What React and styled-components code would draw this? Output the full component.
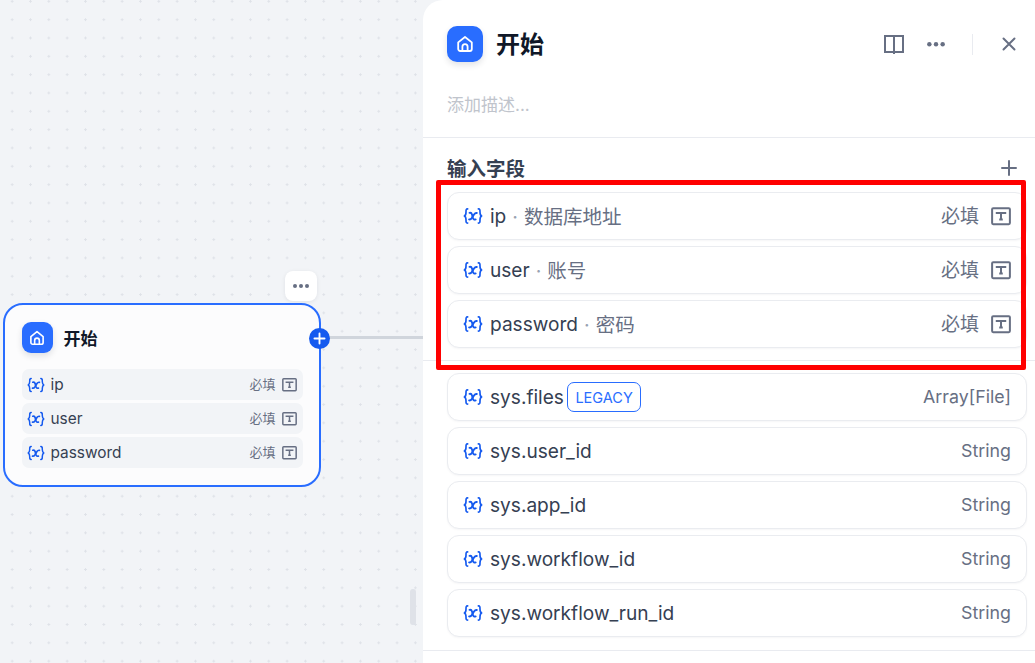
import React from "react";
import styled, { createGlobalStyle } from "styled-components";

const BLUE = "#296dff";
const FONT = `Inter, "Noto Sans CJK SC", sans-serif`;

const GlobalStyle = createGlobalStyle`
  html, body { margin: 0; padding: 0; height: 100%; }
  body { font-family: ${FONT}; background: #f2f4f7; overflow: hidden; }
`;

const Page = styled.div`
  position: relative;
  display: flex;
  width: 1035px;
  height: 663px;
  overflow: hidden;
`;

const Canvas = styled.div`
  position: relative;
  width: 423px;
  flex-shrink: 0;
  background-color: #f2f4f7;
  background-image: radial-gradient(circle, #dfe2e8 1.1px, transparent 1.3px);
  background-size: 18.33px 18.33px;
  background-position: 3px 10.5px;
`;

const Connector = styled.div`
  position: absolute;
  left: 329px;
  top: 336px;
  width: 94px;
  height: 3px;
  background: #d0d5dc;
`;

const MoreButton = styled.div`
  position: absolute;
  left: 285px;
  top: 271px;
  width: 32px;
  height: 30px;
  border-radius: 8px;
  background: #fff;
  box-shadow: 0 1px 4px rgba(16, 24, 40, 0.08);
  display: flex;
  align-items: center;
  justify-content: center;
`;

const Node = styled.div`
  position: absolute;
  left: 3px;
  top: 303px;
  width: 318px;
  height: 184px;
  box-sizing: border-box;
  padding: 17px 16.5px 0;
  background: #fcfcfd;
  border: 2.5px solid ${BLUE};
  border-radius: 20px;
`;

const AddHandle = styled.div`
  position: absolute;
  left: 303.5px;
  top: 22.5px;
  width: 21px;
  height: 21px;
  border-radius: 50%;
  background: #155aef;
  display: flex;
  align-items: center;
  justify-content: center;
`;

const NodeHead = styled.div`
  display: flex;
  align-items: center;
  gap: 11px;
  margin-bottom: 16px;
`;

const AppIcon = styled.div`
  width: ${(p) => p.$size}px;
  height: ${(p) => p.$size}px;
  flex-shrink: 0;
  border-radius: ${(p) => p.$radius}px;
  background: ${BLUE};
  box-shadow: 0 3px 6px rgba(16, 24, 40, 0.12);
  display: flex;
  align-items: center;
  justify-content: center;
`;

const NodeTitle = styled.div`
  font-size: 17px;
  font-weight: 700;
  color: #101828;
`;

const NodeRows = styled.div`
  display: flex;
  flex-direction: column;
  gap: 3px;
`;

const NodeRow = styled.div`
  display: flex;
  align-items: center;
  height: 31px;
  padding: 0 6px 0 5px;
  border-radius: 7px;
  background: #f2f4f7;
`;

const NodeName = styled.span`
  margin-left: 6px;
  font-size: 15.4px;
  color: #354052;
  flex: 1;
`;

const NodeRequired = styled.span`
  font-size: 13px;
  color: #676f83;
  margin: 0 6px 2px 0;
`;

const Panel = styled.div`
  flex: 1;
  background: #fff;
  border-top-left-radius: 20px;
  display: flex;
  flex-direction: column;
`;

const PanelHead = styled.div`
  display: flex;
  align-items: center;
  height: 36px;
  padding: 26px 17px 0 24px;
`;

const PanelTitle = styled.div`
  margin: -3px 0 0 13px;
  font-size: 24px;
  font-weight: 700;
  color: #101828;
  flex: 1;
`;

const HeadActions = styled.div`
  display: flex;
  align-items: center;
  color: #676f83;
`;

const Divider = styled.div`
  width: 1px;
  height: 21px;
  margin: 0 27px 0 26px;
  background: #e9ebf0;
`;

const Description = styled.div`
  margin: 30px 24px 0;
  height: 26px;
  line-height: 26px;
  font-size: 17px;
  color: #c0c4cc;
`;

const Rule = styled.div`
  height: 1px;
  margin-top: ${(p) => p.$top}px;
  background: #e9ebf0;
`;

const SectionHead = styled.div`
  display: flex;
  align-items: center;
  justify-content: space-between;
  height: 22px;
  margin-top: 18px;
  padding: 0 17px 0 24px;
  svg {
    margin-top: 2px;
  }
`;

const SectionTitle = styled.div`
  font-size: 19.5px;
  font-weight: 700;
  color: #354052;
`;

const FieldList = styled.div`
  display: flex;
  flex-direction: column;
  gap: 6px;
  margin: ${(p) => p.$top}px 8px 0 24px;
`;

const Field = styled.div`
  display: flex;
  align-items: center;
  box-sizing: border-box;
  height: 48px;
  padding: 0 15px;
  background: #fff;
  border: 1px solid #eaecf0;
  border-radius: 12px;
  box-shadow: 0 1px 2px rgba(16, 24, 40, 0.04);
`;

const FieldName = styled.span`
  margin-left: 7px;
  font-size: 19.1px;
  color: #354052;
`;

const FieldHint = styled.span`
  margin: 0 0 1px 6px;
  font-size: 19.5px;
  color: #676f83;
  &::before {
    content: "·";
    margin-right: 6px;
    color: #98a2b2;
  }
`;

const Legacy = styled.span`
  margin-left: 3px;
  height: 30px;
  padding: 0 7.5px;
  display: inline-flex;
  align-items: center;
  box-sizing: border-box;
  border: 1px solid ${BLUE};
  border-radius: 7px;
  font-size: 14.5px;
  color: ${BLUE};
`;

const FieldEnd = styled.span`
  margin-left: auto;
  display: flex;
  align-items: center;
  gap: 12px;
  font-size: ${(p) => p.$size}px;
  color: #676f83;
`;

const EndLabel = styled.span`
  margin-bottom: ${(p) => p.$lift}px;
`;

const ResizeGrip = styled.div`
  position: absolute;
  left: 410px;
  top: 589px;
  width: 6px;
  height: 36px;
  border-radius: 3px;
  background: #dfe2e8;
`;

const Highlight = styled.div`
  position: absolute;
  left: 436px;
  top: 180px;
  width: 590px;
  height: 190px;
  box-sizing: border-box;
  border: 5px solid #ff0000;
  border-radius: 2px;
  pointer-events: none;
`;

const IconButton = styled.span`
  display: inline-flex;
  margin-left: ${(p) => p.$left || 0}px;
`;

const HomeIcon = ({ size }) => (
  <svg width={size} height={size} viewBox="0 0 20 20" fill="none" stroke="#fff" strokeWidth="1.8" strokeLinejoin="round" strokeLinecap="round">
    <path d="M3.2 8.4 10 3l6.8 5.4V15a2 2 0 0 1-2 2H5.2a2 2 0 0 1-2-2V8.4Z" />
    <path d="M7.4 17v-4.2a2.6 2.6 0 0 1 5.2 0V17" />
  </svg>
);

const VarIcon = ({ size = 20 }) => (
  <svg width={size} height={size} viewBox="0 0 18 18" fill="none" stroke="#155aef" strokeWidth="1.5" strokeLinecap="round" strokeLinejoin="round">
    <path d="M4.2 2.6C2.6 2.6 2.7 3.9 2.7 5.6c0 2-.3 2.9-1.5 3.4 1.2.5 1.5 1.4 1.5 3.4 0 1.7-.1 3 1.5 3" />
    <path d="M13.8 2.6c1.6 0 1.5 1.3 1.5 3 0 2 .3 2.9 1.5 3.4-1.2.5-1.5 1.4-1.5 3.4 0 1.7.1 3-1.5 3" />
    <path d="M5.8 6.2c1.2-.3 1.9 0 2.3 1.4l.9 3.2c.4 1.3 1.2 1.7 2.4 1.3" strokeWidth="1.7" />
    <path d="M12.4 6.3c-1-.2-1.8.3-2.5 1.3l-2 3.3c-.7 1-1.4 1.4-2.4 1.2" strokeWidth="1.7" />
  </svg>
);

const TextIcon = ({ size = 20 }) => (
  <svg width={size} height={size} viewBox="0 0 18 18" fill="none" stroke="#676f83" strokeWidth="1.8">
    <rect x="1" y="2" width="16" height="14.4" rx="1" />
    <path d="M5.2 7.2V6.2h7.6v1M9 6.2v6M7.4 12.2h3.2" />
  </svg>
);

const Dots = ({ color = "#676f83", width = 18 }) => (
  <svg width={width} height={(width * 6) / 18} viewBox="0 0 18 6" fill={color}>
    <circle cx="3" cy="3" r="2" />
    <circle cx="9" cy="3" r="2" />
    <circle cx="15" cy="3" r="2" />
  </svg>
);

const BookIcon = () => (
  <svg width="22" height="22" viewBox="0 0 22 22" fill="none" stroke="#676f83" strokeWidth="2">
    <path d="M2 3h18v16H2zM11 3v18" />
  </svg>
);

const CloseIcon = () => (
  <svg width="18" height="18" viewBox="0 0 18 18" fill="none" stroke="#676f83" strokeWidth="2" strokeLinecap="round">
    <path d="M3.5 3.5l11 11M14.5 3.5l-11 11" />
  </svg>
);

const PlusIcon = ({ size = 18, color = "#676f83", width = 2 }) => (
  <svg width={size} height={size} viewBox="0 0 18 18" fill="none" stroke={color} strokeWidth={width} strokeLinecap="round">
    <path d="M9 2v14M2 9h14" />
  </svg>
);

const nodeVars = ["ip", "user", "password"];

const inputs = [
  { name: "ip", hint: "数据库地址" },
  { name: "user", hint: "账号" },
  { name: "password", hint: "密码" },
];

const systemVars = [
  { name: "sys.files", type: "Array[File]", legacy: true },
  { name: "sys.user_id", type: "String" },
  { name: "sys.app_id", type: "String" },
  { name: "sys.workflow_id", type: "String" },
  { name: "sys.workflow_run_id", type: "String" },
];

export default function App() {
  return (
    <Page>
      <GlobalStyle />
      <Canvas>
        <Connector />
        <MoreButton>
          <Dots />
        </MoreButton>
        <Node>
          <AddHandle>
            <PlusIcon size={13} color="#fff" width={2.6} />
          </AddHandle>
          <NodeHead>
            <AppIcon $size={31} $radius={9}>
              <HomeIcon size={18} />
            </AppIcon>
            <NodeTitle>开始</NodeTitle>
          </NodeHead>
          <NodeRows>
            {nodeVars.map((name) => (
              <NodeRow key={name}>
                <VarIcon size={18} />
                <NodeName>{name}</NodeName>
                <NodeRequired>必填</NodeRequired>
                <TextIcon size={15} />
              </NodeRow>
            ))}
          </NodeRows>
        </Node>
        <ResizeGrip />
      </Canvas>

      <Panel>
        <PanelHead>
          <AppIcon $size={36} $radius={10}>
            <HomeIcon size={20} />
          </AppIcon>
          <PanelTitle>开始</PanelTitle>
          <HeadActions>
            <BookIcon />
            <IconButton $left={21}>
              <Dots width={20} />
            </IconButton>
            <Divider />
            <CloseIcon />
          </HeadActions>
        </PanelHead>
        <Description>添加描述...</Description>
        <Rule $top={19} />
        <SectionHead>
          <SectionTitle>输入字段</SectionTitle>
          <PlusIcon />
        </SectionHead>
        <FieldList $top={14}>
          {inputs.map((f) => (
            <Field key={f.name}>
              <VarIcon />
              <FieldName>{f.name}</FieldName>
              <FieldHint>{f.hint}</FieldHint>
              <FieldEnd $size={19}>
                <EndLabel $lift={3}>必填</EndLabel>
                <TextIcon />
              </FieldEnd>
            </Field>
          ))}
        </FieldList>
        <Rule $top={12} />
        <FieldList $top={12}>
          {systemVars.map((f) => (
            <Field key={f.name}>
              <VarIcon />
              <FieldName>{f.name}</FieldName>
              {f.legacy && <Legacy>LEGACY</Legacy>}
              <FieldEnd $size={17.8}>
                <EndLabel $lift={2}>{f.type}</EndLabel>
              </FieldEnd>
            </Field>
          ))}
        </FieldList>
        <Rule $top={13} />
      </Panel>
      <Highlight />
    </Page>
  );
}
